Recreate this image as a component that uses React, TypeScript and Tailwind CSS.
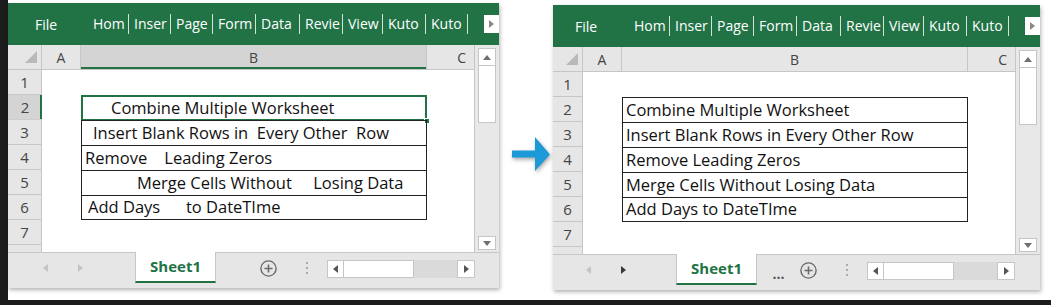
import React from "react";

// Excel "before / after" comparison screenshot

type Row = { text: string; pad: string };

// ribbon tab captions as the narrow window shows them
const ribbonTabs = [
  { label: "Hom", w: "w-[41px]" },
  { label: "Inser", w: "w-[42px]" },
  { label: "Page", w: "w-[42px]" },
  { label: "Form", w: "w-[43px]" },
  { label: "Data", w: "w-[44px]" },
  { label: "Revie", w: "w-[43px]" },
  { label: "View", w: "w-[40px]" },
  { label: "Kuto", w: "w-[43px]" },
  { label: "Kuto", w: "w-[42px]" },
];

const beforeRows: Row[] = [
  { text: "Combine Multiple Worksheet", pad: "pl-[29px]" },
  { text: "Insert Blank Rows in  Every Other  Row", pad: "pl-[11px]" },
  { text: "Remove    Leading Zeros", pad: "pl-[3px]" },
  { text: "Merge Cells Without     Losing Data", pad: "pl-[55px]" },
  { text: "Add Days      to DateTIme", pad: "pl-[6px]" },
];

const afterRows: Row[] = [
  { text: "Combine Multiple Worksheet", pad: "pl-[3px]" },
  { text: "Insert Blank Rows in Every Other Row", pad: "pl-[3px]" },
  { text: "Remove Leading Zeros", pad: "pl-[3px]" },
  { text: "Merge Cells Without Losing Data", pad: "pl-[3px]" },
  { text: "Add Days to DateTIme", pad: "pl-[3px]" },
];

const Tri = ({ dir, className }: { dir: "up" | "down" | "left" | "right"; className?: string }) => {
  const pts = { up: "0,5 4,0 8,5", down: "0,0 8,0 4,5", left: "5,0 5,8 0,4", right: "0,0 0,8 5,4" }[dir];
  const vertical = dir === "up" || dir === "down";
  return (
    <svg width={vertical ? 8 : 5} height={vertical ? 5 : 8} className={className}>
      <polygon points={pts} fill="currentColor" />
    </svg>
  );
};

function Ribbon({ before }: { before: boolean }) {
  return (
    <div className="h-[42px] bg-[#217346] flex items-center text-white text-[14px]">
      <div className={before ? "w-[80px] pl-[27px]" : "w-[76px] pl-[22px]"}>File</div>
      {ribbonTabs.map((t, i) => (
        <div key={i} className={`${t.w} h-[20px] flex items-center border-r border-white/80 pl-[5px]`}>
          <span className="whitespace-nowrap leading-none">{t.label}</span>
        </div>
      ))}
      <div className="flex-1" />
      <div className="w-[15px] h-[18px] bg-white flex items-center justify-center text-[#8a8a8a]">
        <Tri dir="right" />
      </div>
    </div>
  );
}

function Grid({ before, rows }: { before: boolean; rows: Row[] }) {
  const corner = before ? "w-[34px]" : "w-[30px]";
  return (
    <div className="flex">
      <div className="flex-1 flex flex-col">
        {/* column headers */}
        <div className="h-[25px] flex bg-[#e6e6e6] text-[14px] text-[#444]">
          <div className={`${corner} border-r border-b border-[#c6c6c6] flex items-end justify-end pr-[4px] pb-[6px]`}>
            <svg width="12" height="12">
              <polygon points="12,0 12,12 0,12" fill="#b9b9b9" />
            </svg>
          </div>
          <div className="w-[39px] border-r border-b border-[#c6c6c6] flex items-center justify-center">A</div>
          <div
            className={
              before
                ? "w-[346px] border-r border-b border-[#c6c6c6] bg-[#d4d4d4] shadow-[inset_0_-2px_0_#217346] flex items-center justify-center"
                : "w-[346px] border-r border-b border-[#c6c6c6] flex items-center justify-center"
            }
          >
            B
          </div>
          <div className="flex-1 border-b border-[#c6c6c6] flex items-center justify-end pr-[8px]">C</div>
        </div>

        {/* rows */}
        {[1, 2, 3, 4, 5, 6, 7].map((n) => {
          const item = n >= 2 && n <= 6 ? rows[n - 2] : null;
          const selected = before && n === 2;
          return (
            <div key={n} className="h-[25px] flex">
              <div
                className={
                  selected
                    ? `${corner} bg-[#d4d4d4] shadow-[inset_-2px_0_0_#217346] border-b border-[#cdcdcd] flex items-center justify-center text-[15px] text-[#444]`
                    : `${corner} bg-[#e6e6e6] border-r border-b border-[#c6c6c6] flex items-center justify-center text-[15px] text-[#444]`
                }
              >
                {n}
              </div>
              <div className="w-[39px]" />
              {item ? (
                <div
                  className={`${n === 6 ? "border-b" : ""} relative w-[346px] border-l border-r border-t border-[#222] flex items-center ${item.pad} whitespace-pre text-[16.5px] text-[#111] leading-none`}
                >
                  {item.text}
                  {selected && (
                    <>
                      <div className="absolute -left-px -top-px -right-px -bottom-px border-2 border-[#217346]" />
                      <div className="absolute -right-[4px] -bottom-[4px] w-[6px] h-[6px] bg-[#217346] border border-white" />
                    </>
                  )}
                </div>
              ) : (
                <div className="w-[346px]" />
              )}
              <div className="flex-1" />
            </div>
          );
        })}
        <div className="h-[7px] flex">
          <div className={`${corner} bg-[#e6e6e6] border-r border-[#c6c6c6]`} />
        </div>
      </div>

      {/* vertical scrollbar */}
      <div className="w-[25px] border-l border-[#c6c6c6] bg-[#e8e8e8] flex flex-col pt-[3px] pb-[2px] px-[3px]">
        <div className="h-[18px] bg-white border border-[#c6c6c6] flex items-center justify-center text-[#707070]">
          <Tri dir="up" />
        </div>
        <div className="h-[57px] bg-white border-x border-b border-[#c6c6c6]" />
        <div className="flex-1" />
        <div className="h-[14px] bg-white border border-[#c6c6c6] flex items-center justify-center text-[#707070]">
          <Tri dir="down" />
        </div>
      </div>
    </div>
  );
}

function SheetBar({ before }: { before: boolean }) {
  return (
    <div className="h-[36px] flex items-start bg-[#e6e6e6] border-t border-[#c6c6c6]">
      <div className={before ? "w-[127px] h-[30px] flex items-center pl-[35px]" : "w-[123px] h-[30px] flex items-center pl-[33px]"}>
        <Tri dir="left" className="text-[#c4c4c4]" />
        <Tri dir="right" className={before ? "ml-[30px] text-[#c4c4c4]" : "ml-[30px] text-[#3a3a3a]"} />
      </div>
      <div className="-mt-px h-[31px] w-[81px] bg-white border-x border-[#c6c6c6] border-b-2 border-b-[#217346] flex items-center justify-center font-bold text-[15px] text-[#217346]">
        Sheet1
      </div>
      {before ? (
        <div className="w-[44px]" />
      ) : (
        <div className="w-[43px] h-[26px] flex items-end justify-center font-bold text-[14px] text-[#555] leading-none">...</div>
      )}
      <svg width="17" height="17" className="mt-[7px]">
        <circle cx="8.5" cy="8.5" r="7.6" fill="none" stroke="#6a6a6a" strokeWidth="1.4" />
        <path d="M8.5 4.5v8M4.5 8.5h8" stroke="#6a6a6a" strokeWidth="1.6" />
      </svg>
      <div className="w-[29px]" />
      <div className="mt-[9px] flex flex-col gap-[3px]">
        <div className="w-[2px] h-[2px] bg-[#ababab]" />
        <div className="w-[2px] h-[2px] bg-[#ababab]" />
        <div className="w-[2px] h-[2px] bg-[#ababab]" />
      </div>
      <div className="w-[19px]" />
      <div className="mt-[7px] h-[18px] w-[148px] flex">
        <div className="w-[17px] bg-white border border-[#c6c6c6] flex items-center justify-center text-[#555]">
          <Tri dir="left" />
        </div>
        <div className="w-[70px] bg-white border-y border-r border-[#c6c6c6]" />
        <div className="flex-1 bg-[#dadada]" />
        <div className="w-[18px] bg-white border border-[#c6c6c6] flex items-center justify-center text-[#555]">
          <Tri dir="right" />
        </div>
      </div>
    </div>
  );
}

function ExcelPanel({ before, rows }: { before: boolean; rows: Row[] }) {
  return (
    <div
      className={
        before
          ? "mt-[3px] w-[491px] flex flex-col bg-white shadow-[1px_2px_4px_rgba(0,0,0,0.3)]"
          : "mt-[5px] w-[487px] flex flex-col bg-white shadow-[1px_2px_4px_rgba(0,0,0,0.3)]"
      }
    >
      <Ribbon before={before} />
      <Grid before={before} rows={rows} />
      <SheetBar before={before} />
    </div>
  );
}

export default function App() {
  return (
    <div className="w-[1051px] h-[305px] bg-white flex flex-col overflow-hidden font-['Open_Sans','Noto_Sans',sans-serif]">
      <div className="flex-1 flex items-start">
        <div className="w-[8px] self-stretch bg-[#1c1c1c]" />
        <ExcelPanel before rows={beforeRows} />
        <div className="w-[54px] pl-[12px] pt-[136px]">
          <svg width="40" height="36" className="drop-shadow-[1px_2px_2px_rgba(0,0,0,0.35)]">
            <path d="M1 14.5h23V1l15 17.5L24 35V21.5H1z" fill="#1c9ad8" />
          </svg>
        </div>
        <ExcelPanel before={false} rows={afterRows} />
      </div>
      <div className="h-[5px] bg-[#1c1c1c]" />
    </div>
  );
}
